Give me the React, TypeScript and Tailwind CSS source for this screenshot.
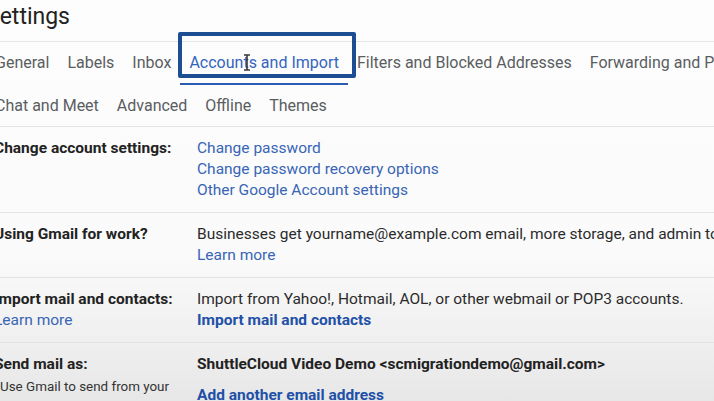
import React from 'react';

const ROW1 = ['General', 'Labels', 'Inbox', 'Accounts and Import', 'Filters and Blocked Addresses', 'Forwarding and POP/IMAP'];
const ROW2 = ['Chat and Meet', 'Advanced', 'Offline', 'Themes'];

function Tab({ label, active, bottom }: { label: string; active?: boolean; bottom?: boolean }) {
  return (
    <div
      className={`relative shrink-0 px-[9px] pt-[10px] ${bottom ? 'pb-[8px]' : 'pb-[10px]'} leading-[21px] whitespace-nowrap border-b-2 ${
        active ? 'border-[#2a5bb3] text-[#3465bd]' : 'border-transparent text-[#5a5d61]'
      }`}
    >
      {label}
      {active && (
        <>
          {/* video annotation box */}
          <div className="absolute left-[-2px] right-[-8px] top-[-10px] bottom-[5px] border-[4px] border-[#1d4e92] rounded-[2px]" />
          {/* text cursor */}
          <svg className="absolute left-[63px] top-[12px]" width="8" height="17" viewBox="0 0 8 17">
            <path d="M1 1h6M4 1v15M1 16h6" stroke="#3a3a3a" strokeWidth="1.6" fill="none" />
          </svg>
        </>
      )}
    </div>
  );
}

function Section({ label, sub, children, last }: { label: string; sub?: React.ReactNode; children: React.ReactNode; last?: boolean }) {
  return (
    <div className={`flex pt-[11px] pb-[11px] leading-[21px] ${last ? '' : 'border-b border-[#e3e3e3]'}`}>
      <div className="w-[206px] shrink-0 pl-[3px]">
        <div className="font-bold text-[#222]">{label}</div>
        {sub}
      </div>
      <div className="flex-1 text-[#2b2b2b] whitespace-nowrap">{children}</div>
    </div>
  );
}

export default function App() {
  return (
    <div
      className="w-[714px] h-[401px] overflow-hidden bg-linear-to-b from-[#fdfdfd] via-[#fafafa] via-65% to-[#e7e7e7]"
      style={{ fontFamily: 'Roboto, "Liberation Sans", sans-serif' }}
    >
      <div className="ml-[-9px] w-[760px]">
        {/* Title */}
        <div className="h-[41px] ml-[-5px] text-[23px] leading-[34px] text-[#222]">Settings</div>

        {/* Tabs */}
        <div className="border-t border-[#e6e6e6] text-[16px]">
          <div className="flex ml-[-5px]">
            {ROW1.map((t) => (
              <Tab key={t} label={t} active={t === 'Accounts and Import'} />
            ))}
          </div>
          <div className="flex ml-[-5px]">
            {ROW2.map((t) => (
              <Tab key={t} label={t} bottom />
            ))}
          </div>
        </div>

        {/* Sections */}
        <div className="border-t border-[#e3e3e3] text-[15.5px]">
          <Section label="Change account settings:">
            <div className="text-[#3865b5]">Change password</div>
            <div className="text-[#3865b5]">Change password recovery options</div>
            <div className="text-[#3865b5]">Other Google Account settings</div>
          </Section>
          <Section label="Using Gmail for work?">
            <div>Businesses get yourname@example.com email, more storage, and admin tools.</div>
            <div className="text-[#3865b5]">Learn more</div>
          </Section>
          <Section label="Import mail and contacts:" sub={<div className="text-[#3865b5]">Learn more</div>}>
            <div>Import from Yahoo!, Hotmail, AOL, or other webmail or POP3 accounts.</div>
            <div className="font-bold text-[#2150a6]">Import mail and contacts</div>
          </Section>
          <Section
            label="Send mail as:"
            sub={<div className="pl-[6px] pt-[1px] text-[13.4px] text-[#333]">Use Gmail to send from your</div>}
            last
          >
            <div className="font-bold text-[#222]">ShuttleCloud Video Demo &lt;scmigrationdemo@gmail.com&gt;</div>
            <div className="font-bold text-[#2150a6] mt-[10px]">Add another email address</div>
          </Section>
        </div>
      </div>
    </div>
  );
}
